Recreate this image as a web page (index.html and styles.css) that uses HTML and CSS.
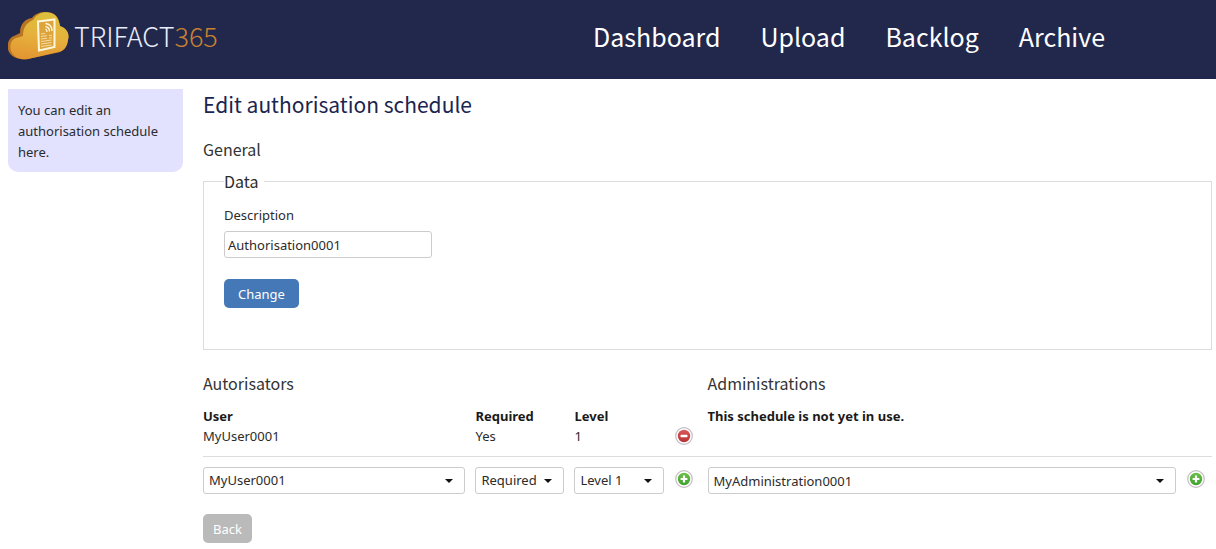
FILE: index.html
```html
<!DOCTYPE html>
<html lang="en">
<head>
<meta charset="utf-8">
<meta name="viewport" content="width=device-width, initial-scale=1">
<title>Edit authorisation schedule</title>
<link rel="stylesheet" href="styles.css">
</head>
<body>
<svg class="sprite" aria-hidden="true">
  <defs>
    <linearGradient id="red" x1="0" y1="0" x2="0" y2="1"><stop offset="0" stop-color="#d9595a"/><stop offset="1" stop-color="#b93234"/></linearGradient>
    <linearGradient id="green" x1="0" y1="0" x2="0" y2="1"><stop offset="0" stop-color="#6cc04a"/><stop offset="1" stop-color="#3fa02c"/></linearGradient>
    <linearGradient id="cloud" x1="0.6" y1="0" x2="0.4" y2="1"><stop offset="0" stop-color="#dcc03c"/><stop offset="0.5" stop-color="#e6b13c"/><stop offset="1" stop-color="#e39632"/></linearGradient>
  </defs>
  <symbol id="icon-remove" viewBox="0 0 18 18">
    <circle cx="9" cy="9" r="8.3" fill="#fff" stroke="#c4bcc4" stroke-width="1.2"/>
    <circle cx="9" cy="9" r="6.2" fill="url(#red)"/>
    <rect x="5.6" y="7.8" width="6.8" height="2.4" rx="0.5" fill="#fff"/>
  </symbol>
  <symbol id="icon-add" viewBox="0 0 18 18">
    <circle cx="9" cy="9" r="8.3" fill="#fff" stroke="#c4bcc4" stroke-width="1.2"/>
    <circle cx="9" cy="9" r="6.2" fill="url(#green)"/>
    <path d="M7.9 5.6h2.2v2.3h2.3v2.2h-2.3v2.3H7.9v-2.3H5.6V7.9h2.3z" fill="#fff"/>
  </symbol>
</svg>

<header class="topbar">
  <a class="brand" href="#">
    <svg class="brand-mark" viewBox="0 0 62 50" aria-hidden="true">
      <path d="M1 41C-2 35 0 27 6 25L12 22C12 13 17 8 24 7C28 1 37 0 44 2C50 4 51 10 52 15C58 17 62 22 60 29C59 37 55 41 48 42L20 48C12 49 4 47 1 41Z" fill="#b97524"/>
      <path d="M4 42C1 37 2 29 8 27L15 25C15 17 18 12 25 9C29 2 37 0 43 2C49 4 51 9 52 15C58 17 62 22 60 29C59 36 56 40 50 41L20 48C13 49 7 47 4 42Z" fill="url(#cloud)"/>
      <path d="M30 10.500L46.500 8.500V36L31 39.500Z" fill="#dda43b" stroke="#fff7dc" stroke-width="2"/>
      <path d="M37.500 12.500C41.500 13 44 16 44 20M37.500 15.500C40 16 41.500 17.500 41.500 20.500M37.500 18C38.500 18.500 39 19.500 39 21" fill="none" stroke="#fff7dc" stroke-width="1.300"/>
      <path d="M33 25.500L39 24.700M33 28L39 27.200M33 30.500L43.500 29M33 33L43.500 31.500M33 35.500L43.500 34M41 24.500L44 24.200M41 27L44 26.700M33 23L37 22.500" fill="none" stroke="#f5dda5" stroke-width="1"/>
    </svg>
    <span class="brand-name">TRIFACT<span class="brand-number">365</span></span>
  </a>
  <nav class="nav" aria-label="Main">
    <a href="#">Dashboard</a>
    <a href="#">Upload</a>
    <a href="#">Backlog</a>
    <a href="#">Archive</a>
  </nav>
</header>

<div class="page">
  <aside class="hint">You can edit an authorisation schedule here.</aside>

  <main class="content">
    <h1 class="title">Edit authorisation schedule</h1>
    <h2 class="heading">General</h2>

    <form>
      <fieldset class="panel">
        <legend class="panel-title">Data</legend>
        <label class="label" for="description">Description</label>
        <input class="input" id="description" type="text" value="Authorisation0001">
        <button class="button primary" type="button">Change</button>
      </fieldset>
    </form>

    <div class="lists">
      <section>
        <h2 class="heading">Autorisators</h2>
        <table class="table">
          <thead>
            <tr><th class="col-user">User</th><th class="col-option">Required</th><th class="col-option">Level</th><th class="col-action"></th></tr>
          </thead>
          <tbody>
            <tr class="entry">
              <td>MyUser0001</td><td>Yes</td><td>1</td>
              <td class="action"><button class="icon-button" type="button" aria-label="Remove MyUser0001"><svg><use href="#icon-remove"/></svg></button></td>
            </tr>
            <tr class="adder">
              <td><span class="select"><select aria-label="User"><option>MyUser0001</option></select></span></td>
              <td><span class="select"><select aria-label="Required"><option>Required</option></select></span></td>
              <td><span class="select"><select aria-label="Level"><option>Level 1</option></select></span></td>
              <td class="action"><button class="icon-button" type="button" aria-label="Add user"><svg><use href="#icon-add"/></svg></button></td>
            </tr>
          </tbody>
        </table>
      </section>

      <section>
        <h2 class="heading">Administrations</h2>
        <p class="empty">This schedule is not yet in use.</p>
        <div class="add-row">
          <span class="select"><select aria-label="Administration"><option>MyAdministration0001</option></select></span>
          <button class="icon-button" type="button" aria-label="Add administration"><svg><use href="#icon-add"/></svg></button>
        </div>
      </section>
    </div>

    <button class="button back" type="button">Back</button>
  </main>
</div>
</body>
</html>
```
FILE: styles.css
```css
* { box-sizing: border-box; }

body {
  margin: 0;
  background: #fff;
  color: #2b2b2b;
  font: 13px/20px "Noto Sans", "Open Sans", sans-serif;
}

.sprite { position: absolute; width: 0; height: 0; }

.topbar {
  display: flex;
  align-items: center;
  justify-content: space-between;
  min-height: 79px;
  padding: 0 111px 7px 8px;
  background: #22284c;
}

.brand {
  display: flex;
  align-items: center;
  gap: 4px;
  color: #e9edfb;
  text-decoration: none;
}
.brand-mark { width: 62px; height: 50px; }
.brand-name { font: 300 27px/40px "Noto Sans CJK JP", sans-serif; }
.brand-number { color: #c9812f; }

.nav { display: flex; gap: 40px; }
.nav a {
  color: #fff;
  font: 25px/40px "Noto Sans CJK JP", sans-serif;
  text-decoration: none;
}

.page {
  display: grid;
  grid-template-columns: 175px 1fr;
  gap: 20px;
  align-items: start;
  padding: 10px 4px 6px 8px;
}

.hint {
  padding: 11px 10px 9px;
  border-radius: 0 0 10px 10px;
  background: #e2e2ff;
  line-height: 21px;
}

.title {
  margin: 0 0 18px;
  color: #1c2450;
  font: 21px/30px "Noto Sans CJK JP", sans-serif;
}

.heading {
  margin: 0;
  color: #333;
  font: 16px/24px "Noto Sans CJK JP", sans-serif;
}

.panel {
  min-height: 180px;
  margin: 8px 0 21px;
  padding: 12px 20px 41px;
  border: 1px solid #dcdcdc;
}
.panel-title {
  padding: 0 6px 0 0;
  font: 16px/24px "Noto Sans CJK JP", sans-serif;
}

.label { display: block; margin-bottom: 6px; }

.input {
  display: block;
  width: 208px;
  height: 27px;
  margin-bottom: 21px;
  padding: 0 3px;
  border: 1px solid #ccc;
  border-radius: 3px;
  color: inherit;
  font: inherit;
}

.button {
  height: 29px;
  border: 0;
  border-radius: 5px;
  color: #fff;
  font: inherit;
}
.primary { padding: 0 14px; background: #4478b6; }
.back { margin-top: 20px; padding: 0 10px; background: #bababa; }

.lists { display: grid; grid-template-columns: 1fr 1fr; }

.table {
  width: 100%;
  margin-top: 11px;
  border-collapse: collapse;
  table-layout: fixed;
}
.table th, .table td {
  padding: 0 10px 0 0;
  text-align: left;
  vertical-align: top;
}
.table th { color: #1a1a1a; }
.col-user { width: 54%; }
.col-option { width: 99px; }
.table .action { padding: 0 15px 0 0; text-align: right; }
.table .entry td { height: 30px; border-bottom: 1px solid #dcdcdc; }
.table .adder td { padding-top: 10px; }
.col-action { width: 34px; }

.empty {
  margin: 11px 0 0;
  padding-bottom: 30px;
  border-bottom: 1px solid #dcdcdc;
  color: #1a1a1a;
  font-weight: 700;
}

.add-row {
  display: flex;
  align-items: start;
  gap: 11px;
  padding: 10px 7px 0 0;
}
.add-row .select { flex: 1; }

.select { position: relative; display: block; }
.select select {
  display: block;
  width: 100%;
  height: 27px;
  padding: 0 20px 0 5px;
  border: 1px solid #ccc;
  border-radius: 3px;
  background: #fff;
  color: inherit;
  font: inherit;
  appearance: none;
}
.select::after {
  content: "";
  position: absolute;
  top: 12px;
  right: 12px;
  border: 4px solid transparent;
  border-top-color: #111;
  border-bottom: 0;
  pointer-events: none;
}

.icon-button {
  display: inline-block;
  width: 18px;
  height: 18px;
  margin-top: 3px;
  padding: 0;
  border: 0;
  background: none;
}
.entry .icon-button { margin-top: 1px; }
.icon-button svg { display: block; width: 18px; height: 18px; }
```
